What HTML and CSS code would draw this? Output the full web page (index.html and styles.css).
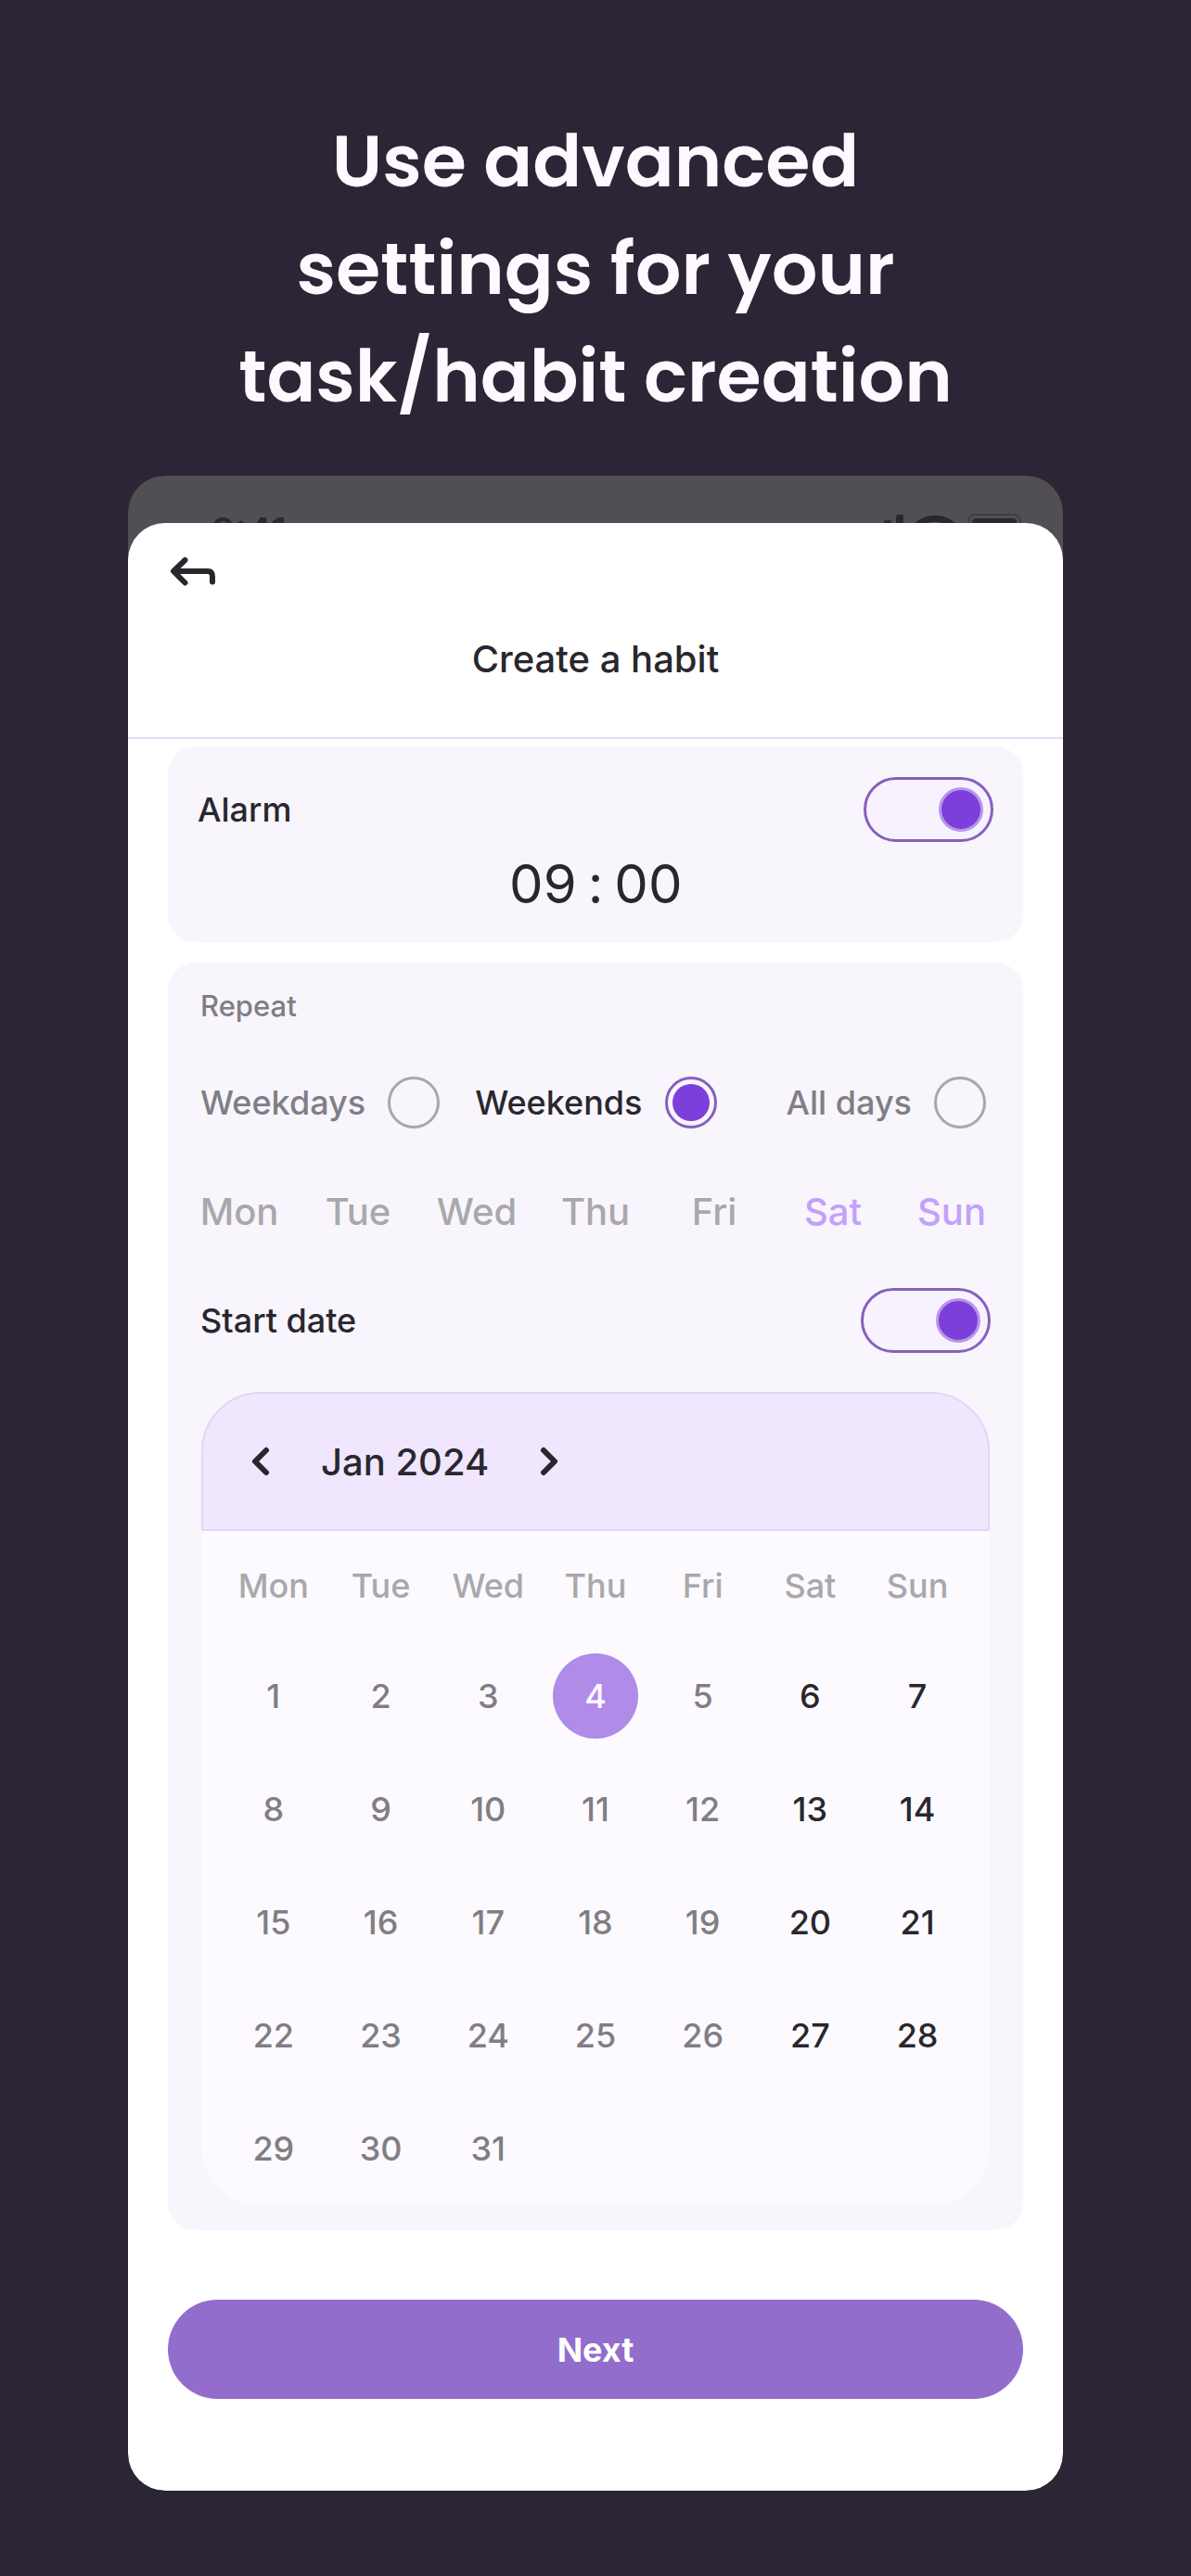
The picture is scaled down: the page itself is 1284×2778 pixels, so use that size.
FILE: index.html
```html
<!DOCTYPE html>
<html lang="en">
<head>
    <meta charset="UTF-8">
    <meta name="viewport" content="width=device-width, initial-scale=1.0">
    <title>Create a habit</title>
    <link rel="stylesheet" href="styles.css">
</head>
<body>
    <h1>Use advanced<br>settings for your<br>task/habit creation</h1>

    <main class="phone">
        <div class="status-bar">
            <span class="clock">9:41</span>
            <svg class="status-icons" viewBox="0 0 150 40" aria-hidden="true">
                <rect x="2" y="8" width="8" height="24" rx="2"/>
                <rect x="15" y="2" width="8" height="30" rx="2"/>
                <path d="M38 13a30 30 0 0 1 38 0" fill="none" stroke="#2b282d" stroke-width="7"/>
                <rect x="93" y="2" width="56" height="29" rx="7" fill="none" stroke="#3f3c42" stroke-width="2"/>
                <rect x="97" y="6" width="48" height="21" rx="4"/>
            </svg>
        </div>

        <form class="sheet">
            <header class="sheet-header">
                <button type="button" class="back" aria-label="Back">
                    <svg viewBox="0 0 48 31">
                        <path d="M15.500 3L3 15l12.500 12.500M4 15h36q5 0 5 6v5.500"/>
                    </svg>
                </button>
                <h2>Create a habit</h2>
            </header>

            <div class="content">
                <section class="card alarm">
                    <div class="row">
                        <label for="alarm">Alarm</label>
                        <input type="checkbox" class="toggle" id="alarm" checked>
                    </div>
                    <div class="time">
                        <input type="text" value="09" aria-label="Hours">
                        <span>:</span>
                        <input type="text" value="00" aria-label="Minutes">
                    </div>
                </section>

                <section class="card repeat">
                    <h3>Repeat</h3>

                    <div class="options">
                        <label>Weekdays <input type="radio" name="repeat"></label>
                        <label>Weekends <input type="radio" name="repeat" checked></label>
                        <label>All days <input type="radio" name="repeat"></label>
                    </div>

                    <div class="days">
                        <button type="button">Mon</button>
                        <button type="button">Tue</button>
                        <button type="button">Wed</button>
                        <button type="button">Thu</button>
                        <button type="button">Fri</button>
                        <button type="button" class="active">Sat</button>
                        <button type="button" class="active">Sun</button>
                    </div>

                    <div class="row start">
                        <label for="start">Start date</label>
                        <input type="checkbox" class="toggle" id="start" checked>
                    </div>

                    <div class="calendar">
                        <div class="calendar-header">
                            <button type="button" aria-label="Previous month">
                                <svg viewBox="0 0 20 32"><path d="M16 4L4 16l12 12"/></svg>
                            </button>
                            <span>Jan 2024</span>
                            <button type="button" aria-label="Next month">
                                <svg viewBox="0 0 20 32"><path d="M4 4l12 12L4 28"/></svg>
                            </button>
                        </div>
                        <div class="calendar-body">
                            <table>
                                <thead>
                                    <tr><th>Mon</th><th>Tue</th><th>Wed</th><th>Thu</th><th>Fri</th><th>Sat</th><th>Sun</th></tr>
                                </thead>
                                <tbody id="dates"></tbody>
                            </table>
                        </div>
                    </div>
                </section>

                <button type="submit" class="next">Next</button>
            </div>
        </form>
    </main>

    <script>
        const dates = document.getElementById('dates');
        const selected = 4;

        // January 2024 starts on a Monday
        for (let first = 1; first <= 31; first += 7) {
            const row = dates.insertRow();
            for (let day = first; day < first + 7; day++) {
                const cell = row.insertCell();
                if (day > 31) continue;
                const button = document.createElement('button');
                button.type = 'button';
                button.textContent = day;
                if (day === selected) button.classList.add('selected');
                cell.appendChild(button);
            }
        }
    </script>
</body>
</html>
```

FILE: styles.css
```css
*, *::before {
    box-sizing: border-box;
}

body {
    margin: 0;
    padding: 116px 138px 92px;
    background-color: #2c2535;
    color: #29272d;
    font-family: Inter, sans-serif;
    font-size: 36px;
    font-weight: 500;
}

button, input {
    margin: 0;
    padding: 0;
    border: none;
    background: none;
    color: inherit;
    font: inherit;
}

button {
    cursor: pointer;
}

h1, h2, h3 {
    margin: 0;
}

h1 {
    margin-bottom: 49px;
    color: #fcf9ff;
    font-family: Poppins, Inter, sans-serif;
    font-size: 78px;
    font-weight: 600;
    line-height: 116px;
    text-align: center;
}

.phone {
    border-radius: 40px;
    background-color: #514e54;
    overflow: hidden;
}

.status-bar {
    display: flex;
    justify-content: space-between;
    align-items: flex-start;
    height: 51px;
    padding: 40px 45px 0 90px;
    color: #2b282d;
}

.clock {
    font-size: 40px;
    font-weight: 600;
    line-height: 40px;
}

.status-icons {
    flex-shrink: 0;
    width: 150px;
    height: 40px;
    fill: #2b282d;
}

.sheet {
    position: relative;
    border-radius: 40px;
    background-color: #fff;
}

.sheet-header {
    padding: 37px 46px 58px;
    border-bottom: 2px solid #e6dcf7;
}

.back, .back svg {
    display: block;
    width: 48px;
    height: 31px;
}

.sheet svg path {
    fill: none;
    stroke: #29272d;
    stroke-width: 6;
    stroke-linecap: round;
    stroke-linejoin: round;
}

h2 {
    margin-top: 53px;
    font-size: 40px;
    font-weight: 500;
    line-height: 52px;
    text-align: center;
}

.content {
    padding: 8px 43px 99px;
}

.card {
    margin-bottom: 22px;
    border-radius: 30px;
    background-color: #f8f5fd;
}

.row {
    display: flex;
    justify-content: space-between;
    align-items: center;
}

.toggle {
    display: flex;
    align-items: center;
    justify-content: flex-end;
    width: 140px;
    height: 70px;
    padding-right: 8px;
    border: 3px solid #8660bc;
    border-radius: 35px;
    background-color: #f8f2ff;
    appearance: none;
    cursor: pointer;
}

.toggle::before {
    content: "";
    width: 48px;
    height: 48px;
    border: 3px solid #b796ea;
    border-radius: 50%;
    background-color: #7d3fda;
}

.toggle:not(:checked) {
    justify-content: flex-start;
    padding: 0 0 0 8px;
}

.alarm {
    padding: 33px 32px 27px;
}

.time {
    display: flex;
    justify-content: center;
    align-items: center;
    gap: 12px;
    height: 72px;
    margin-top: 9px;
    font-size: 58px;
    font-weight: 400;
}

.time input {
    width: 80px;
}

.time input:first-child {
    text-align: right;
}

.repeat {
    margin-bottom: 75px;
    padding: 28px 0 27px;
}

h3 {
    padding: 0 35px;
    color: #807e84;
    font-size: 31px;
    font-weight: 500;
    line-height: 38px;
}

.options {
    display: flex;
    gap: 38px;
    margin-top: 57px;
    padding: 0 40px 0 35px;
}

.options label {
    display: flex;
    align-items: center;
    gap: 24px;
    color: #807e84;
}

.options label:has(:checked) {
    color: #29272d;
}

.options label:last-child {
    margin-left: auto;
}

.options input {
    display: grid;
    place-items: center;
    width: 56px;
    height: 56px;
    border: 3px solid #a8a7aa;
    border-radius: 50%;
    appearance: none;
    cursor: pointer;
}

.options input:checked {
    border-color: #8660bc;
}

.options input:checked::before {
    content: "";
    width: 40px;
    height: 40px;
    border-radius: 50%;
    background-color: #7d3fda;
}

.days {
    display: grid;
    grid-template-columns: repeat(7, 1fr);
    margin-top: 64px;
    padding: 0 13px;
    color: #a9a8ab;
    font-size: 40px;
    line-height: 52px;
}

.days .active {
    color: #c3a0fa;
}

.start {
    margin-top: 56px;
    padding: 0 35px;
}

.calendar {
    margin: 42px 36px 0;
}

.calendar-header {
    display: flex;
    align-items: center;
    gap: 55px;
    height: 150px;
    padding: 0 52px;
    border: 2px solid #e2d6f5;
    border-radius: 64px 64px 0 0;
    background-color: #f0e6fe;
    font-size: 40px;
}

.calendar-header svg {
    display: block;
    width: 20px;
    height: 32px;
}

.calendar-body {
    padding: 0 20px;
    border-radius: 0 0 64px 64px;
    background-color: #fcfaff;
}

table {
    width: 100%;
    border-collapse: collapse;
    table-layout: fixed;
    text-align: center;
}

th {
    height: 117px;
    padding: 0;
    color: #a9a8ab;
    font-weight: 500;
}

td {
    height: 122px;
    padding: 0;
    color: #807e84;
}

td:nth-child(n+6) {
    color: #29272d;
}

td button {
    width: 92px;
    height: 92px;
    border-radius: 50%;
    vertical-align: middle;
}

td .selected {
    background-color: #b08be8;
    color: #fcf9ff;
}

.next {
    display: block;
    width: 100%;
    height: 107px;
    border-radius: 54px;
    background-color: #936dcb;
    color: #fff;
    font-weight: 700;
}

@media (max-width: 900px) {
    body {
        padding-left: 20px;
        padding-right: 20px;
    }

    .options {
        flex-wrap: wrap;
    }
}
```
